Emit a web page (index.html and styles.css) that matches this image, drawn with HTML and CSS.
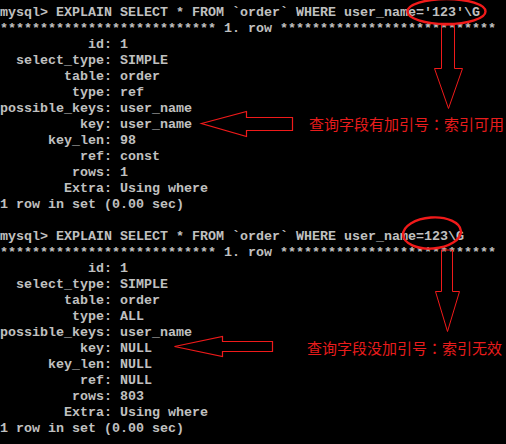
FILE: index.html
```html
<!DOCTYPE html>
<html lang="zh">
<head>
<meta charset="utf-8">
<link rel="stylesheet" href="styles.css">
</head>
<body>
<div class="screen">
  <div class="console">
    <div class="line">mysql&gt; EXPLAIN SELECT * FROM `order` WHERE user_name='123'\G</div>
    <div class="line">*************************** 1. row ***************************</div>
    <div class="line">           id: 1</div>
    <div class="line">  select_type: SIMPLE</div>
    <div class="line">        table: order</div>
    <div class="line">         type: ref</div>
    <div class="line">possible_keys: user_name</div>
    <div class="line">          key: user_name</div>
    <div class="line">      key_len: 98</div>
    <div class="line">          ref: const</div>
    <div class="line">         rows: 1</div>
    <div class="line">        Extra: Using where</div>
    <div class="line">1 row in set (0.00 sec)</div>
    <div class="line"> </div>
    <div class="line">mysql&gt; EXPLAIN SELECT * FROM `order` WHERE user_name=123\G</div>
    <div class="line">*************************** 1. row ***************************</div>
    <div class="line">           id: 1</div>
    <div class="line">  select_type: SIMPLE</div>
    <div class="line">        table: order</div>
    <div class="line">         type: ALL</div>
    <div class="line">possible_keys: user_name</div>
    <div class="line">          key: NULL</div>
    <div class="line">      key_len: NULL</div>
    <div class="line">          ref: NULL</div>
    <div class="line">         rows: 803</div>
    <div class="line">        Extra: Using where</div>
    <div class="line">1 row in set (0.00 sec)</div>
  </div>

  <svg class="marks" width="506" height="444" viewBox="0 0 506 444">
    <g fill="none" stroke="#f01a1a">
      <ellipse cx="446.5" cy="11.5" rx="39" ry="12.5" stroke-width="2.4"/>
      <ellipse cx="432" cy="233" rx="29" ry="15.5" stroke-width="2.4" transform="rotate(-4 432 233)"/>
      <polygon points="441.5,25 454.5,25 454.5,68.5 462.5,68.5 448.5,108.5 434.5,68.5 441.5,68.5" stroke-width="1"/>
      <polygon points="441.5,250 452.5,250 452.5,291.5 459.5,291.5 447.5,331.5 435.5,291.5 441.5,291.5" stroke-width="1"/>
      <polygon points="201.5,123.5 246.5,111.5 246.5,117.5 292.5,117.5 292.5,130.5 246.5,130.5 246.5,136.5" stroke-width="1.2"/>
      <polygon points="174.5,346.5 222.5,336.5 222.5,341.5 272.5,341.5 272.5,351.5 222.5,351.5 222.5,356.5" stroke-width="1.2"/>
    </g>
  </svg>

  <div class="note note-one">查询字段有加引号<span class="colon" lang="zh-TW">：</span>索引可用</div>
  <div class="note note-two">查询字段没加引号<span class="colon" lang="zh-TW">：</span>索引无效</div>
</div>
</body>
</html>
```

FILE: styles.css
```css
html, body {
  margin: 0;
  padding: 0;
  background: #000;
}

.screen {
  position: relative;
  width: 506px;
  height: 444px;
  overflow: hidden;
  background: #000;
}

.console {
  padding-top: 5px;
  font-family: "Liberation Mono", "DejaVu Sans Mono", monospace;
  font-size: 13.333px;
  font-weight: bold;
  color: #c0c0c0;
}

.line {
  height: 16px;
  line-height: 16px;
  white-space: pre;
}

.marks {
  position: absolute;
  left: 0;
  top: 0;
}

.note {
  position: absolute;
  font-family: "Noto Sans CJK SC", "Noto Sans", sans-serif;
  font-size: 15px;
  line-height: 15px;
  color: #e81c1c;
  white-space: nowrap;
}

.colon {
  font-family: "Noto Sans CJK TC", "Noto Sans CJK SC", sans-serif;
}

.note-one {
  left: 309px;
  top: 116px;
}

.note-two {
  left: 307px;
  top: 340px;
}
```
